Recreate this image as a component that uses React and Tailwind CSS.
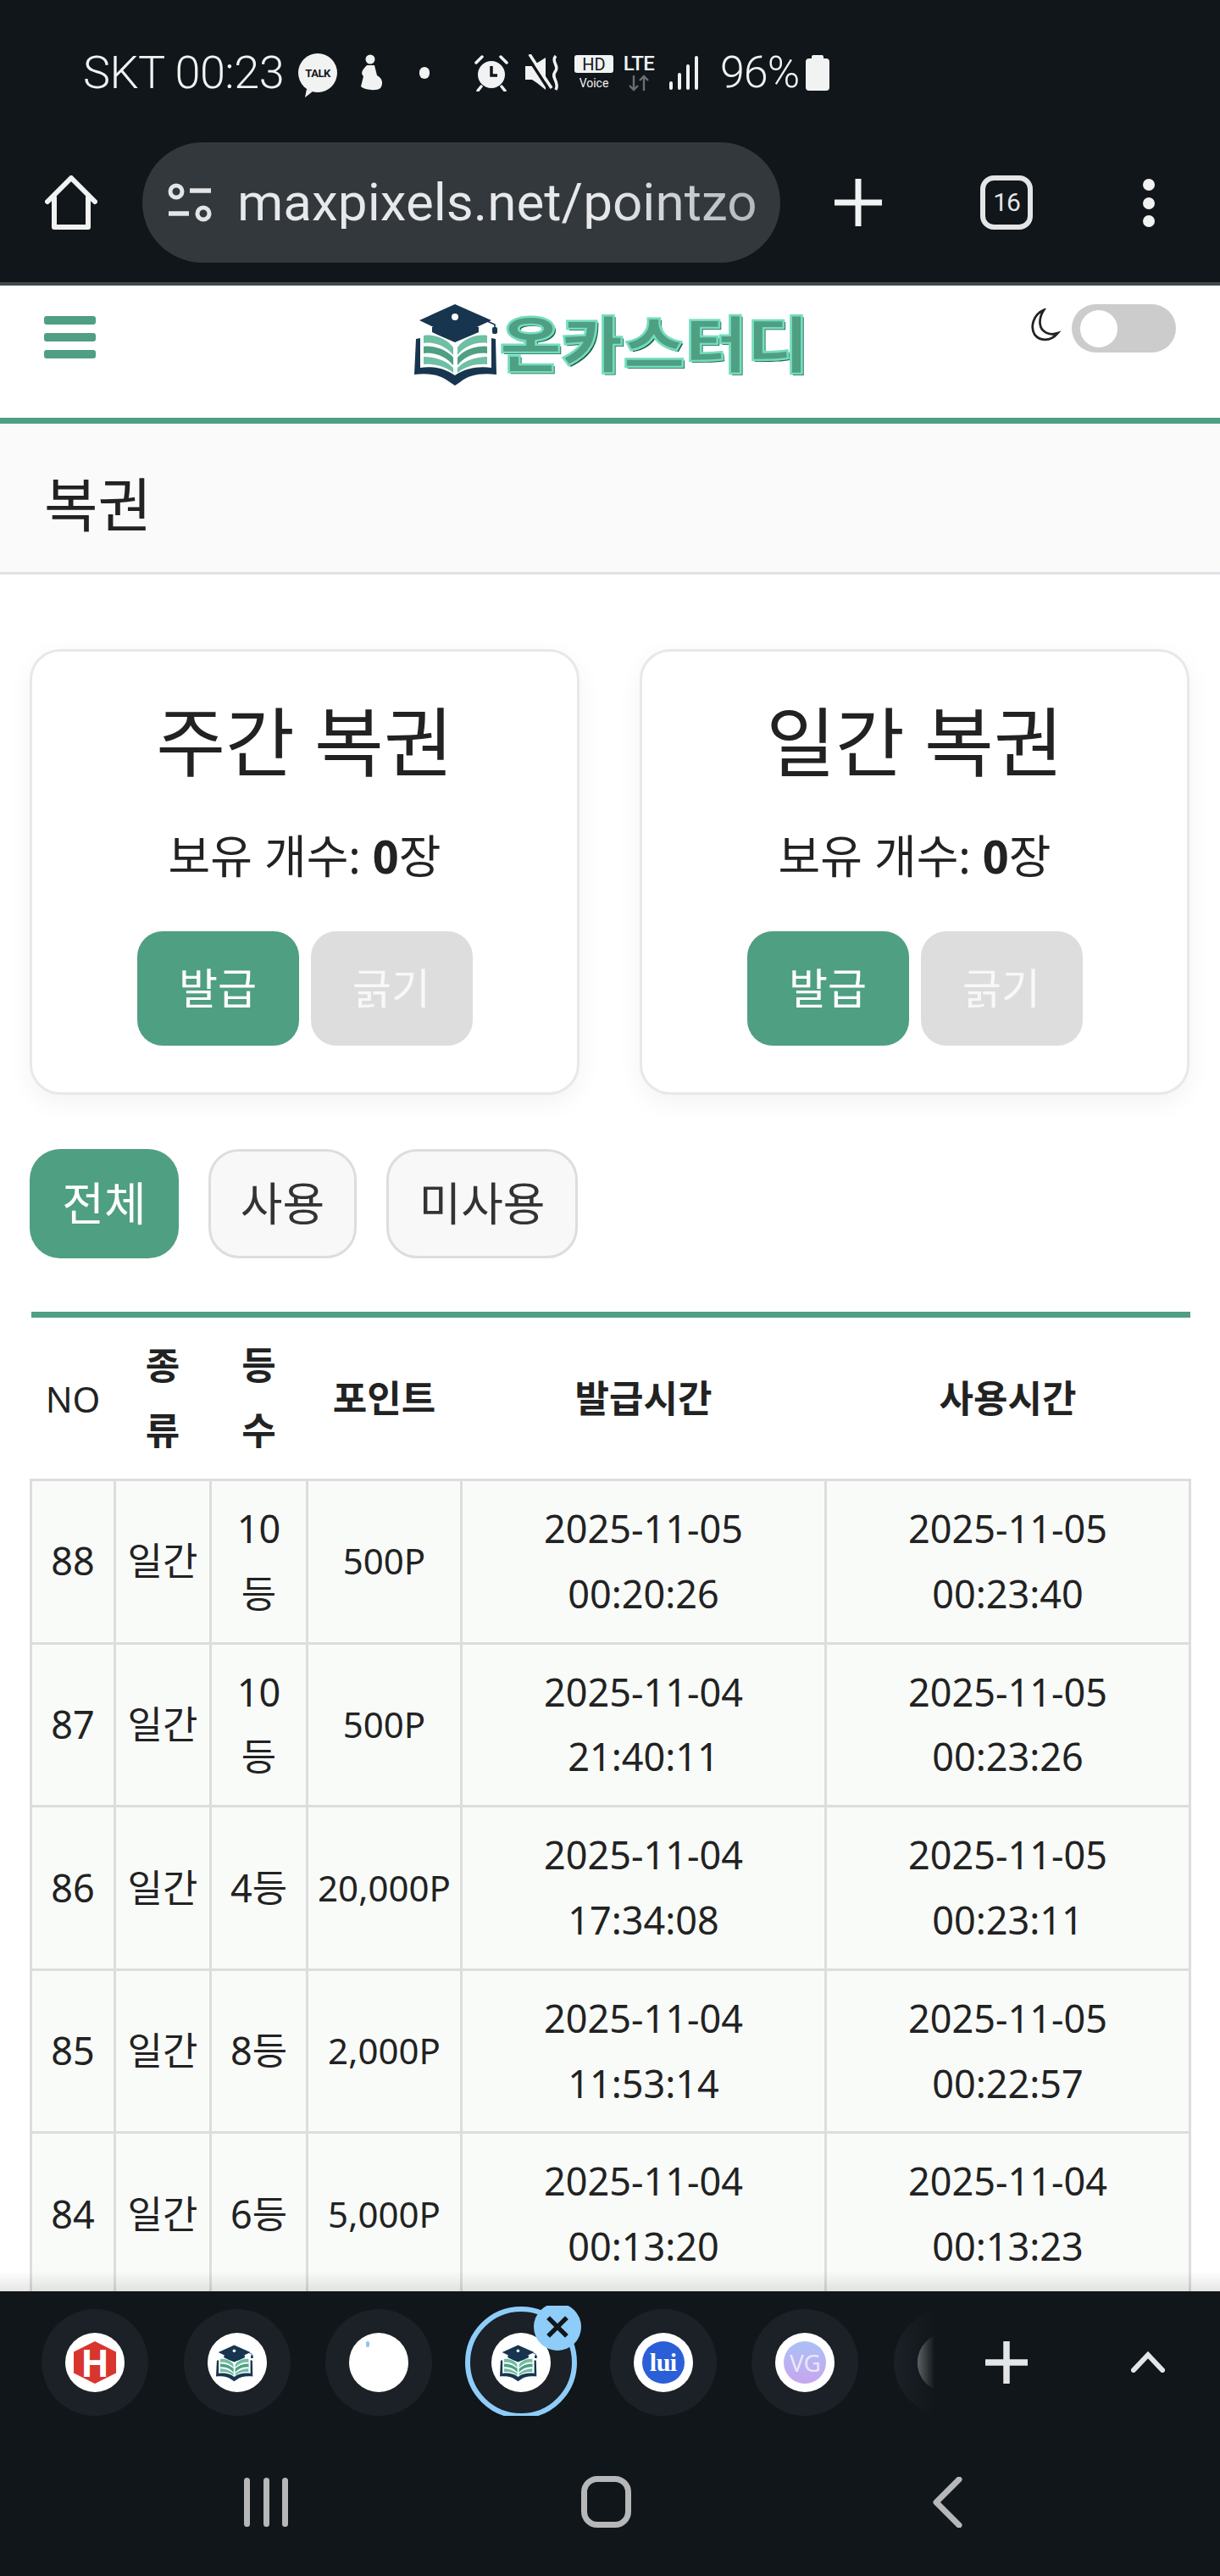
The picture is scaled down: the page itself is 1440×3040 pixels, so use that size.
import React from 'react';

const rows = [
  { no: 88, kind: '일간', grade: '10\n등', point: '500P', issued: '2025-11-05\n00:20:26', used: '2025-11-05\n00:23:40' },
  { no: 87, kind: '일간', grade: '10\n등', point: '500P', issued: '2025-11-04\n21:40:11', used: '2025-11-05\n00:23:26' },
  { no: 86, kind: '일간', grade: '4등', point: '20,000P', issued: '2025-11-04\n17:34:08', used: '2025-11-05\n00:23:11' },
  { no: 85, kind: '일간', grade: '8등', point: '2,000P', issued: '2025-11-04\n11:53:14', used: '2025-11-05\n00:22:57' },
  { no: 84, kind: '일간', grade: '6등', point: '5,000P', issued: '2025-11-04\n00:13:20', used: '2025-11-04\n00:13:23' },
];

function LogoMark({ className }) {
  return (
    <svg viewBox="0 0 130 110" className={className}>
      {/* book cover */}
      <path d="M11 50 L16 49 L16 84 C30 82 44 84 57 93 C70 84 86 82 100 84 L100 49 L105 50 L106 92 C88 90 74 92 63 101 L57 105 L51 101 C40 92 26 90 9 92 Z" fill="#17354f" />
      {/* pages */}
      <path d="M20 46 C34 44 48 50 55 60 L55 90 C46 82 32 79 20 80 Z" fill="#6fbfa5" />
      <path d="M95 46 C81 44 67 50 60 60 L60 90 C69 82 83 79 95 80 Z" fill="#6fbfa5" />
      <path d="M20 55 C34 53 47 59 55 69 L55 72 C47 63 34 58 20 59 Z" fill="#ffffff" />
      <path d="M95 55 C81 53 68 59 60 69 L60 72 C68 63 81 58 95 59 Z" fill="#ffffff" />
      <path d="M20 67 C34 65 47 71 55 81 L55 84 C47 76 34 71 20 71 Z" fill="#ffffff" />
      <path d="M95 67 C81 65 68 71 60 81 L60 84 C68 76 81 71 95 71 Z" fill="#ffffff" />
      <path d="M20 59 C34 58 47 63 55 72 L55 81 C47 71 34 65 20 67 Z" fill="#4f9f82" />
      <path d="M95 59 C81 58 68 63 60 72 L60 81 C68 71 81 65 95 67 Z" fill="#4f9f82" />
      {/* cap */}
      <path d="M30 36 L30 42 C38 46 48 50 57 54 C66 50 76 46 85 42 L85 36 Z" fill="#17354f" />
      <path d="M57 9 L15 28 L57 48 L100 28 Z" fill="#17354f" />
      <circle cx="57" cy="24" r="4" fill="#ffffff" />
      <path d="M95 29 L104 33 L104 38" stroke="#17354f" strokeWidth="1.6" fill="none" />
      <rect x="101" y="36" width="6" height="8" rx="2" fill="#17354f" />
    </svg>
  );
}

function StatusBar() {
  return (
    <div className="flex h-[168px] items-center pt-[4px] pl-[98px] text-[#f1f2f2]">
      <span className="w-[254px] text-[54px] leading-none font-light tracking-[-0.5px]">SKT 00:23</span>

      {/* kakao talk */}
      <div className="relative flex h-[46px] w-[46px] items-center justify-center rounded-full bg-[#f1f2f2]">
        <span className="text-[13px] leading-none font-bold tracking-[-0.5px] text-[#10161a]">TALK</span>
        <svg viewBox="0 0 10 10" className="absolute -bottom-[6px] left-[8px] h-[10px] w-[10px]"><path d="M2 0 L9 3 L0 10 Z" fill="#f1f2f2" /></svg>
      </div>

      {/* samsung health figure */}
      <svg viewBox="0 0 30 44" className="ml-[24px] h-[44px] w-[30px]">
        <circle cx="15" cy="6" r="5.5" fill="#f1f2f2" />
        <path d="M11 13 C6 18 3 22 7 26 L4 38 C8 42 22 44 27 40 C31 34 29 28 23 25 L20 13 Z" fill="#f1f2f2" />
      </svg>

      <span className="ml-[43px] h-[14px] w-[12px] rounded-full bg-[#f1f2f2]" />

      {/* alarm */}
      <svg viewBox="0 0 40 44" className="ml-[53px] h-[44px] w-[40px]">
        <circle cx="20" cy="24" r="16" fill="#f1f2f2" />
        <path d="M20 14 V25 H27" stroke="#10161a" strokeWidth="3.5" fill="none" />
        <path d="M2 10 L9 3 M38 10 L31 3 M8 38 L4 43 M32 38 L36 43" stroke="#f1f2f2" strokeWidth="3.5" strokeLinecap="round" />
      </svg>

      {/* mute */}
      <svg viewBox="0 0 42 44" className="ml-[20px] h-[44px] w-[42px]">
        <path d="M0 14 H8 L24 4 V42 L14 34 L8 30 H0 Z" fill="#f1f2f2" />
        <path d="M2 2 L28 42" stroke="#10161a" strokeWidth="3.5" />
        <path d="M5 0 L31 40" stroke="#f1f2f2" strokeWidth="3.5" />
        <path d="M36 2 C30 9 41 14 35 21 C30 28 41 33 36 42" stroke="#f1f2f2" strokeWidth="3.5" fill="none" />
      </svg>

      {/* hd voice */}
      <div className="ml-[16px] flex w-[46px] flex-col items-center">
        <span className="flex h-[21px] w-[46px] items-center justify-center rounded-[3px] bg-[#f1f2f2] text-[20px] leading-none text-[#10161a]">HD</span>
        <span className="mt-[3px] text-[14px] leading-[18px]">Voice</span>
      </div>

      {/* lte */}
      <div className="ml-[9px] flex w-[42px] flex-col items-center">
        <span className="text-[24px] leading-[22px] font-medium tracking-[-0.5px]">LTE</span>
        <svg viewBox="0 0 30 20" className="mt-[2px] h-[20px] w-[30px]">
          <path d="M9 1 V18 M4 13 L9 18 L14 13" stroke="#6a6f72" strokeWidth="2.4" fill="none" />
          <path d="M21 19 V2 M16 7 L21 2 L26 7" stroke="#6a6f72" strokeWidth="2.4" fill="none" />
        </svg>
      </div>

      {/* signal */}
      <div className="ml-[15px] flex h-[40px] items-end gap-[6px]">
        <span className="h-[10px] w-[4px] rounded-[2px] bg-[#f1f2f2]" />
        <span className="h-[20px] w-[4px] rounded-[2px] bg-[#f1f2f2]" />
        <span className="h-[30px] w-[4px] rounded-[2px] bg-[#f1f2f2]" />
        <span className="h-[40px] w-[4px] rounded-[2px] bg-[#f1f2f2]" />
      </div>

      <span className="ml-[26px] w-[101px] text-[52px] leading-none font-light tracking-[-1px]">96%</span>

      {/* battery */}
      <div className="flex flex-col items-center">
        <span className="h-[4px] w-[14px] rounded-t-[2px] bg-[#f1f2f2]" />
        <span className="h-[38px] w-[28px] rounded-[4px] bg-[#f1f2f2]" />
      </div>
    </div>
  );
}

function BrowserBar() {
  return (
    <div className="flex h-[165px] items-start text-[#e3e5e6]">
      <svg viewBox="0 0 62 64" className="mt-[39px] ml-[53px] h-[64px] w-[62px]">
        <path d="M3 31 L31 3 L59 31 M11 26 V61 H51 V26" stroke="#f1f2f2" strokeWidth="6" fill="none" strokeLinejoin="round" strokeLinecap="round" />
      </svg>

      <div className="relative ml-[53px] flex h-[142px] w-[753px] items-center rounded-full bg-[#33383c] pl-[30px]">
        <svg viewBox="0 0 52 46" className="h-[46px] w-[52px]">
          <circle cx="10" cy="10" r="7" stroke="#e3e5e6" strokeWidth="5" fill="none" />
          <path d="M26 9 H51 M1 36 H25" stroke="#e3e5e6" strokeWidth="5.5" />
          <circle cx="42" cy="36" r="7" stroke="#e3e5e6" strokeWidth="5" fill="none" />
        </svg>
        <span className="ml-[30px] bg-gradient-to-r from-[#e6e8ea] from-70% to-[#b4b9bd] bg-clip-text text-[62px] leading-none whitespace-nowrap text-transparent">maxpixels.net/pointzo</span>
      </div>

      <svg viewBox="0 0 56 56" className="mt-[43px] ml-[64px] h-[56px] w-[56px]">
        <path d="M28 0 V56 M0 28 H56" stroke="#f1f2f2" strokeWidth="7" strokeLinecap="round" />
      </svg>

      <div className="mt-[39px] ml-[116px] flex h-[64px] w-[62px] items-center justify-center rounded-[16px] border-[6px] border-[#e3e5e6]">
        <span className="text-[30px] leading-none tracking-[-1px]">16</span>
      </div>

      <div className="mt-[43px] ml-[130px] flex h-[57px] flex-col justify-between">
        <span className="h-[14px] w-[14px] rounded-full bg-[#f1f2f2]" />
        <span className="h-[14px] w-[14px] rounded-full bg-[#f1f2f2]" />
        <span className="h-[14px] w-[14px] rounded-full bg-[#f1f2f2]" />
      </div>
    </div>
  );
}

function SiteHeader() {
  return (
    <header className="flex h-[163px] items-start border-b-[7px] border-[#4f9f82] bg-white">
      <div className="mt-[36px] ml-[52px] flex w-[61px] flex-col gap-[10px]">
        <span className="h-[10px] rounded-[3px] bg-[#4f9f82]" />
        <span className="h-[10px] rounded-[3px] bg-[#4f9f82]" />
        <span className="h-[10px] rounded-[3px] bg-[#4f9f82]" />
      </div>

      <div className="mt-[13px] ml-[367px] flex items-center">
        <LogoMark className="h-[110px] w-[130px]" />
        <span className="-mt-[7px] -ml-[20px] origin-left scale-x-[1.1] text-[72px] leading-[110px] font-black whitespace-nowrap text-[#4f9f82] [font-family:'Noto_Sans_CJK_KR',sans-serif] [text-shadow:2px_2px_0_#1e5f47] [-webkit-text-stroke:2.5px_#74dcc0]">온카스터디</span>
      </div>

      <div className="mt-[22px] mr-[52px] ml-auto flex items-start">
        <svg viewBox="3.5 1 18.5 22" className="mt-[5px] mr-[13px] h-[40px] w-[37px]" fill="none" stroke="#222222" strokeWidth="1.5">
          <path d="M12 2 C5 5 3 13 6 18 C9 22 16 23 21 17 C15 19 10 16 9.5 11 C9.2 8 10 5 12 2 Z" />
        </svg>
        <div className="flex h-[57px] w-[123px] items-center rounded-full bg-[#cccccc] pl-[10px]">
          <span className="h-[44px] w-[44px] rounded-full bg-white" />
        </div>
      </div>
    </header>
  );
}

function LottoCard({ title }) {
  return (
    <div className="flex h-[526px] flex-col items-center rounded-[36px] border-[3px] border-[#e8e8e8] bg-white pt-[52px] shadow-[0_9px_30px_rgba(0,0,0,0.05)]">
      <h2 className="text-[89px] leading-[108px] font-normal text-[#222222]">{title}</h2>
      <p className="mt-[46px] text-[54px] leading-[70px] text-[#222222]">보유 개수: <b className="font-bold">0</b>장</p>
      <div className="mt-[54px] flex gap-[14px]">
        <button className="h-[135px] w-[191px] rounded-[30px] bg-[#4f9f82] text-[50px] text-white">발급</button>
        <button className="h-[135px] w-[191px] rounded-[30px] bg-[#dddddd] text-[50px] text-[#f8f8f8]">긁기</button>
      </div>
    </div>
  );
}

function TicketTable() {
  return (
    <table className="mt-[63px] w-[1368px] table-fixed border-collapse border-t-[7px] border-[#4f9f82] text-center text-[#222222]">
      <colgroup>
        <col className="w-[99px]" />
        <col className="w-[113px]" />
        <col className="w-[114px]" />
        <col className="w-[182px]" />
        <col className="w-[430px]" />
        <col className="w-[430px]" />
      </colgroup>
      <thead>
        <tr className="h-[195px] text-[44px] leading-[77px]">
          <th className="text-[42px] font-normal">NO</th>
          <th className="font-bold whitespace-pre-line">{'종\n류'}</th>
          <th className="font-bold whitespace-pre-line">{'등\n수'}</th>
          <th className="font-bold">포인트</th>
          <th className="font-bold">발급시간</th>
          <th className="font-bold">사용시간</th>
        </tr>
      </thead>
      <tbody>
        {rows.map((row) => (
          <tr key={row.no} className="bg-[#f9fbf9] text-[45px] leading-[76.8px]">
            <td className="border-[3px] border-[#dddddd] py-[18px]">{row.no}</td>
            <td className="border-[3px] border-[#dddddd] py-[18px]">{row.kind}</td>
            <td className="border-[3px] border-[#dddddd] py-[18px] whitespace-pre-line">{row.grade}</td>
            <td className="border-[3px] border-[#dddddd] py-[18px] text-[42px]">{row.point}</td>
            <td className="border-[3px] border-[#dddddd] py-[18px] whitespace-pre-line">{row.issued}</td>
            <td className="border-[3px] border-[#dddddd] py-[18px] whitespace-pre-line">{row.used}</td>
          </tr>
        ))}
      </tbody>
    </table>
  );
}

function TabCircle({ children }) {
  return (
    <div className="relative flex h-[126px] w-[126px] shrink-0 items-center justify-center rounded-full bg-[#1b2126]">
      {children}
    </div>
  );
}

function Favicon({ children }) {
  return (
    <div className="flex h-[70px] w-[70px] items-center justify-center overflow-hidden rounded-full bg-white">
      {children}
    </div>
  );
}

function TabStrip() {
  return (
    <div className="relative h-[130px] w-[1103px] overflow-hidden pt-[4px]">
      <div className="flex gap-[41.7px] pl-[49px]">
        <TabCircle>
          <Favicon>
            <div className="flex h-[50px] w-[50px] items-center justify-center bg-[#d8352e] [clip-path:polygon(50%_0,100%_25%,100%_75%,50%_100%,0_75%,0_25%)]">
              <span className="text-[44px] leading-none font-bold text-white">H</span>
            </div>
          </Favicon>
        </TabCircle>
        <TabCircle>
          <Favicon><LogoMark className="h-[50px] w-[58px]" /></Favicon>
        </TabCircle>
        <TabCircle>
          <Favicon><span className="mr-[26px] mb-[44px] h-[7px] w-[4px] rounded-full bg-[#8ec4f0]" /></Favicon>
        </TabCircle>
        <TabCircle>
          <Favicon><LogoMark className="h-[50px] w-[58px]" /></Favicon>
          <div className="absolute -inset-[3px] rounded-full border-[6px] border-[#8ecdf9]" />
          <div className="absolute -top-[7px] left-[78px] flex h-[56px] w-[56px] items-center justify-center rounded-full bg-[#8ecdf9]">
            <svg viewBox="0 0 28 28" className="h-[34px] w-[34px]"><path d="M5 5 L23 23 M23 5 L5 23" stroke="#10161a" strokeWidth="4.5" /></svg>
          </div>
        </TabCircle>
        <TabCircle>
          <Favicon>
            <div className="flex h-[50px] w-[50px] items-center justify-center rounded-full bg-[#2a5fd8]">
              <span className="text-[30px] leading-none font-bold tracking-[-0.5px] text-white [font-family:'Liberation_Serif',serif]">lui</span>
            </div>
          </Favicon>
        </TabCircle>
        <TabCircle>
          <Favicon>
            <div className="flex h-[50px] w-[50px] items-center justify-center rounded-full bg-gradient-to-b from-[#a9c0f5] to-[#c7a6ef]">
              <span className="text-[28px] leading-none text-white/70">VG</span>
            </div>
          </Favicon>
        </TabCircle>
        <TabCircle>
          <Favicon>
            <div className="h-[70px] w-[70px] rounded-full bg-[#d0d0d0]" />
          </Favicon>
        </TabCircle>
      </div>
      {/* fade on the right of the strip */}
      <div className="absolute inset-y-0 right-0 w-[50px] bg-gradient-to-r from-transparent to-[#10161a]" />
    </div>
  );
}

function BottomBar() {
  return (
    <div className="h-[336px] shrink-0 bg-[#10161a]">
      <div className="flex items-start pt-[17px]">
        <TabStrip />
        <svg viewBox="0 0 50 50" className="mt-[42px] ml-[60px] h-[50px] w-[50px]">
          <path d="M25 0 V50 M0 25 H50" stroke="#e3e5e6" strokeWidth="7.5" />
        </svg>
        <svg viewBox="0 0 40 26" className="mt-[53px] ml-[122px] h-[26px] w-[40px]">
          <path d="M3 23 L20 5 L37 23" stroke="#e3e5e6" strokeWidth="6" fill="none" strokeLinecap="round" />
        </svg>
      </div>
      <div className="mt-[71px] flex items-center pl-[288px]">
        <div className="flex h-[58px] w-[52px] justify-between">
          <span className="w-[7px] rounded-full bg-[#b5b7b9]" />
          <span className="w-[7px] rounded-full bg-[#b5b7b9]" />
          <span className="w-[7px] rounded-full bg-[#b5b7b9]" />
        </div>
        <div className="ml-[346px] h-[61px] w-[59px] rounded-[19px] border-[7px] border-[#b5b7b9]" />
        <svg viewBox="0 0 36 60" className="ml-[355px] h-[60px] w-[36px]">
          <path d="M32 3 L5 30 L32 57" stroke="#b5b7b9" strokeWidth="7" fill="none" strokeLinecap="round" strokeLinejoin="round" />
        </svg>
      </div>
    </div>
  );
}

export default function App() {
  return (
    <div className="flex h-[3040px] w-[1440px] flex-col overflow-hidden bg-white [font-family:'Noto_Sans','Noto_Sans_CJK_KR',sans-serif]">
      <div className="shrink-0 bg-[#10161a] [font-family:Roboto,sans-serif]">
        <StatusBar />
        <BrowserBar />
        <div className="h-[4px] bg-[#42494d]" />
      </div>

      <main className="relative min-h-0 flex-1 overflow-hidden">
        <SiteHeader />

        <div className="flex h-[178px] items-center border-b-[3px] border-[#dee2e6] bg-[#fafafa] pt-[16px] pl-[52px]">
          <h1 className="text-[69px] leading-none font-normal text-[#222222]">복권</h1>
        </div>

        <div className="pt-[88px] pr-[36px] pl-[35px]">
          <div className="grid grid-cols-2 gap-[71px]">
            <LottoCard title="주간 복권" />
            <LottoCard title="일간 복권" />
          </div>

          <div className="mt-[64px] flex gap-[35px] text-[54px]">
            <button className="h-[129px] w-[176px] rounded-[36px] bg-[#4f9f82] text-white">전체</button>
            <button className="h-[129px] w-[175px] rounded-[36px] border-[3px] border-[#dddddd] bg-[#f8f8f8] text-[#333333]">사용</button>
            <button className="h-[129px] w-[226px] rounded-[36px] border-[3px] border-[#dddddd] bg-[#f8f8f8] text-[#333333]">미사용</button>
          </div>

          <TicketTable />
        </div>

        {/* browser toolbar shadow on the page */}
        <div className="absolute inset-x-0 bottom-0 h-[24px] bg-gradient-to-b from-transparent to-black/10" />
      </main>

      <BottomBar />
    </div>
  );
}
